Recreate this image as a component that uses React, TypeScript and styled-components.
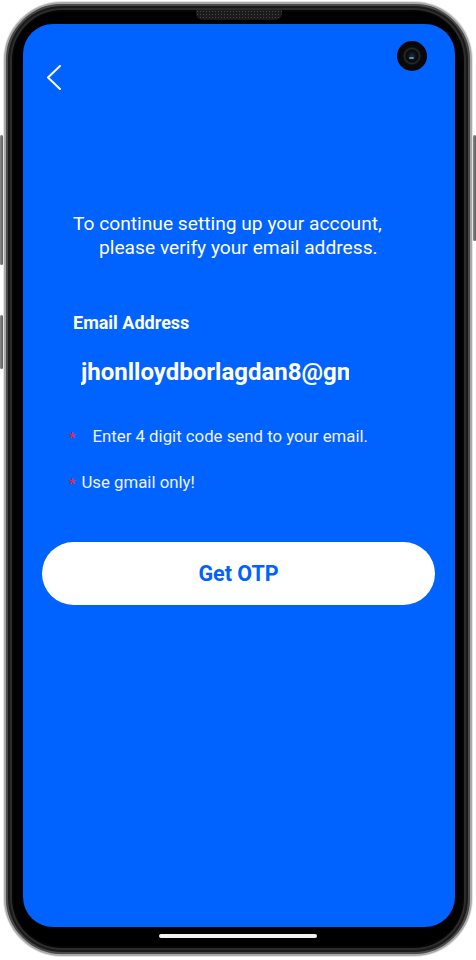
import React from "react";
import styled, { createGlobalStyle } from "styled-components";

const BLUE = "#0062ff";

const Global = createGlobalStyle`
  html, body { margin: 0; padding: 0; background: #ffffff; }
  body { font-family: Roboto, "Noto Sans", Arial, sans-serif; }
  * { box-sizing: border-box; }
`;

const Page = styled.div`
  width: 476px;
  height: 960px;
  padding: 2px 4px 0 4px;
  background: #ffffff;
`;

const Phone = styled.div`
  position: relative;
  width: 468px;
  height: 954px;
  border-radius: 58px;
  background: #000;
  border: 2px solid #a9a9a9;
  box-shadow: 0 0 0 1px #e4e4e4, inset 0 0 0 2px #4a4a4a, inset 0 0 0 4px #1a1a1a,
    inset 0 0 0 6px #2c2c2c, inset 0 0 0 8px #050505;
  display: flex;
  padding: 20px 15px 27px 17px;
`;

const SideKey = styled.div<{ $side: "left" | "right"; $top: number; $h: number }>`
  position: absolute;
  ${(p) => (p.$side === "left" ? "left: -6px;" : "right: -6px;")}
  top: ${(p) => p.$top}px;
  width: 3px;
  height: ${(p) => p.$h}px;
  border-radius: 2px;
  background: linear-gradient(90deg, #8a8a8a, #5c5c5c);
`;

const Speaker = styled.div`
  position: absolute;
  top: 6px;
  left: 190px;
  width: 86px;
  height: 10px;
  border-radius: 0 0 7px 7px;
  background-color: #1b1b1b;
  background-image: radial-gradient(#4a4a4a 0.8px, transparent 1px);
  background-size: 3px 3px;
`;

const Camera = styled.div`
  position: absolute;
  top: 37px;
  left: 391px;
  width: 30px;
  height: 30px;
  border-radius: 50%;
  background: radial-gradient(
    circle at 50% 50%,
    #22303c 0,
    #11161c 3px,
    #07090b 6px,
    #2a2a2a 7.5px,
    #0b0b0b 9px,
    #050505 15px
  );
  &::after {
    content: "";
    position: absolute;
    left: 12px;
    top: 16px;
    width: 5px;
    height: 2px;
    border-radius: 2px;
    background: #6fb6e6;
    opacity: 0.75;
  }
`;

const HomeBar = styled.div`
  position: absolute;
  left: 153px;
  bottom: 16px;
  width: 158px;
  height: 4px;
  border-radius: 2px;
  background: #f2f2f2;
`;

const Screen = styled.div`
  flex: 1;
  background: ${BLUE};
  border-radius: 30px;
  display: flex;
  flex-direction: column;
  overflow: hidden;
  color: #ffffff;
`;

const BackButton = styled.button`
  align-self: flex-start;
  margin: 41px 0 0 23px;
  padding: 0;
  width: 16px;
  height: 26px;
  border: 0;
  background: transparent;
  display: flex;
`;

const Intro = styled.p`
  margin: 121px 0 0 0;
  font-size: 19.2px;
  line-height: 24px;
  font-weight: 400;
`;

const IntroLine = styled.span<{ $indent: number }>`
  display: block;
  padding-left: ${(p) => p.$indent}px;
  white-space: nowrap;
`;

const FieldLabel = styled.label`
  margin: 52px 0 0 50px;
  font-size: 18px;
  line-height: 21px;
  font-weight: 700;
`;

const EmailInput = styled.input`
  margin: 25px 0 0 58px;
  width: 268px;
  height: 28px;
  padding: 0;
  border: 0;
  outline: none;
  background: transparent;
  color: #ffffff;
  font-family: Roboto, Arial, sans-serif;
  font-size: 24px;
  font-weight: 700;
`;

const Notes = styled.ul`
  list-style: none;
  margin: 40px 0 0 46px;
  padding: 0;
  display: flex;
  flex-direction: column;
  gap: 26px;
`;

const Note = styled.li<{ $gap: number }>`
  display: flex;
  align-items: flex-start;
  gap: ${(p) => p.$gap}px;
  height: 20px;
  font-size: 16.8px;
  line-height: 20px;
  color: #eef4ff;
`;

const Star = styled.span`
  color: #ff1f1f;
  font-size: 15px;
  line-height: 12px;
  margin-top: 6px;
`;

const PrimaryButton = styled.button`
  margin: 50px 20px 0 19px;
  height: 63px;
  border: 0;
  border-radius: 32px;
  background: #ffffff;
  color: ${BLUE};
  font-family: Roboto, Arial, sans-serif;
  font-size: 21.5px;
  font-weight: 700;
  display: flex;
  align-items: center;
  justify-content: center;
  cursor: pointer;
`;

export default function App() {
  return (
    <Page>
      <Global />
      <Phone>
        <SideKey $side="left" $top={131} $h={130} />
        <SideKey $side="left" $top={311} $h={54} />
        <SideKey $side="right" $top={131} $h={106} />
        <Screen>
          <BackButton aria-label="Back">
            <svg width="16" height="26" viewBox="0 0 16 26" fill="none">
              <polyline
                points="14,1 2,12.5 14,24"
                stroke="#ffffff"
                strokeWidth="2"
                strokeLinecap="round"
                strokeLinejoin="round"
              />
            </svg>
          </BackButton>
          <Intro>
            <IntroLine $indent={50}>To continue setting up your account,</IntroLine>
            <IntroLine $indent={76}>please verify your email address.</IntroLine>
          </Intro>
          <FieldLabel htmlFor="email">Email Address</FieldLabel>
          <EmailInput id="email" readOnly value="jhonlloydborlagdan8@gmail.com" />
          <Notes>
            <Note $gap={17}>
              <Star>*</Star>
              <span>Enter 4 digit code send to your email.</span>
            </Note>
            <Note $gap={6}>
              <Star>*</Star>
              <span>Use gmail only!</span>
            </Note>
          </Notes>
          <PrimaryButton>Get OTP</PrimaryButton>
        </Screen>
        <Speaker />
        <Camera />
        <HomeBar />
      </Phone>
    </Page>
  );
}
